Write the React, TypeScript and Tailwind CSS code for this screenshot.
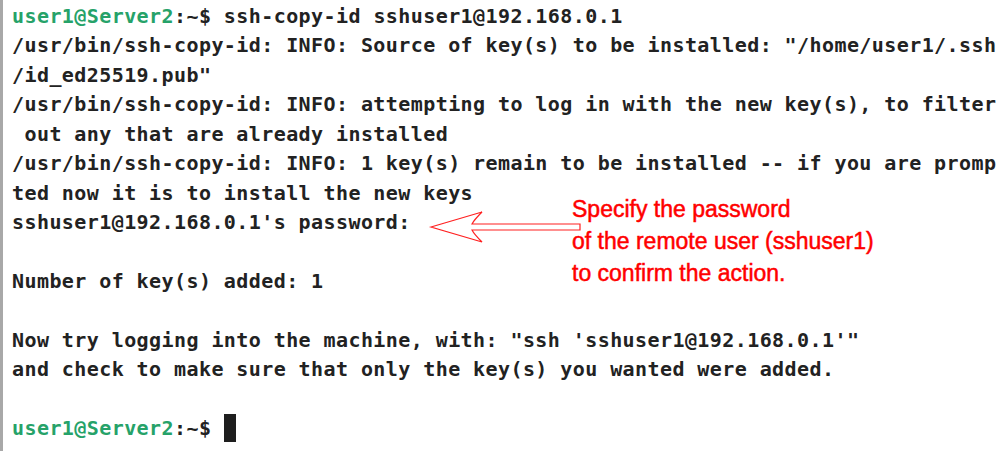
import React from "react";

const G = ({ children }: { children: React.ReactNode }) => (
  <span className="text-[#26a269]">{children}</span>
);

export default function App() {
  const lines: React.ReactNode[] = [
    <>
      <G>user1@Server2</G>:~$ ssh-copy-id sshuser1@192.168.0.1
    </>,
    '/usr/bin/ssh-copy-id: INFO: Source of key(s) to be installed: "/home/user1/.ssh',
    '/id_ed25519.pub"',
    "/usr/bin/ssh-copy-id: INFO: attempting to log in with the new key(s), to filter",
    " out any that are already installed",
    "/usr/bin/ssh-copy-id: INFO: 1 key(s) remain to be installed -- if you are promp",
    "ted now it is to install the new keys",
    "sshuser1@192.168.0.1's password:",
    "",
    "Number of key(s) added: 1",
    "",
    "Now try logging into the machine, with: \"ssh 'sshuser1@192.168.0.1'\"",
    "and check to make sure that only the key(s) you wanted were added.",
    "",
    <>
      <G>user1@Server2</G>:~$ <span className="inline-block w-[12px] h-[28px] bg-[#1e1e1e] align-[-7px]" />
    </>,
  ];
  return (
    <div className="relative w-[1000px] h-[451px] bg-white border-l-[3px] border-[#a8a8a8] overflow-hidden">
      <div
        className="pl-[9px] pt-[2px] text-[20px] leading-[29.43px] tracking-[0.42px] font-bold text-[#222222] whitespace-pre"
        style={{ fontFamily: '"DejaVu Sans Mono", monospace' }}
      >
        {lines.map((l, i) => (
          <div key={i} className="h-[29.43px]">
            {l}
          </div>
        ))}
      </div>
      <svg className="absolute left-[425px] top-[207px]" width="160" height="38" viewBox="0 0 160 38">
        <path
          d="M3 20 L54 5 Q46 13 44 17 L152 17 L152 23 L44 23 Q46 27 54 35 Z"
          fill="none"
          stroke="#ff2020"
          strokeWidth="1.2"
        />
      </svg>
      <div
        className="absolute left-[569px] top-[193px] text-[23px] leading-[32px] text-[#ff0000] [-webkit-text-stroke:0.5px_#ff0000]"
        style={{ fontFamily: '"Liberation Sans", Arial, sans-serif' }}
      >
        <div>Specify the password</div>
        <div>of the remote user (sshuser1)</div>
        <div>to confirm the action.</div>
      </div>
    </div>
  );
}
